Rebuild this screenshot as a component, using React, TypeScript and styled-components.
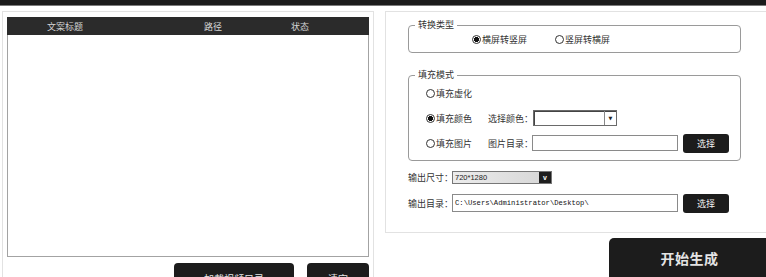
import React from 'react';
import styled, { createGlobalStyle } from 'styled-components';

const GlobalStyle = createGlobalStyle`
  html, body {
    margin: 0;
    padding: 0;
    overflow: hidden;
    background: #fff;
  }
  body {
    font-family: "Noto Sans CJK SC", "Noto Sans", sans-serif;
    font-size: 9px;
    color: #333;
  }
`;

const TopBar = styled.div`
  height: 5px;
  background: #1b1b1b;
  border-bottom: 1px solid #7a7a7a;
`;

const Main = styled.div`
  display: flex;
  gap: 11px;
  padding: 5px 0 0 2px;
`;

const LeftPanel = styled.div`
  width: 372px;
  height: 290px;
  box-sizing: border-box;
  flex-shrink: 0;
  border: 1px solid #e2e2e2;
  border-bottom: none;
  padding: 5px 4px 0;
`;

const Table = styled.div`
  display: flex;
  flex-direction: column;
  height: 240px;
  box-sizing: border-box;
  border: 1px solid #a3a3a3;
  border-top: none;
`;

const TableHead = styled.div`
  display: flex;
  align-items: center;
  height: 18px;
  margin: 0 -1px;
  background: #2b2b2b;
  color: #d6d6d6;
`;

const HeadCell = styled.div<{ $w: number; $ml?: number }>`
  width: ${(p) => p.$w}px;
  margin-left: ${(p) => p.$ml ?? 0}px;
  text-align: center;
`;

const ButtonRow = styled.div`
  display: flex;
  justify-content: flex-end;
  gap: 13px;
  margin-top: 6px;
`;

const DarkButton = styled.button<{ $w: number }>`
  width: ${(p) => p.$w}px;
  height: 30px;
  border: none;
  border-radius: 4px;
  background: #1c1c1c;
  color: #e6e6e6;
  font-family: "Noto Sans CJK SC", sans-serif;
  font-size: 10px;
  padding: 0;
`;

const RightColumn = styled.div`
  display: flex;
  flex-direction: column;
  flex: 1;
`;

const RightPanel = styled.div`
  border: 1px solid #e2e2e2;
  border-right: none;
  padding: 7px 0 19px 22px;
`;

const GroupBox = styled.fieldset<{ $mt?: number }>`
  width: 333px;
  box-sizing: border-box;
  margin: ${(p) => p.$mt ?? 0}px 0 0;
  border: 1px solid #9a9a9a;
  border-radius: 4px;
  padding: 2px 0 7px 0;
  min-inline-size: 0;
`;

const Legend = styled.legend`
  font-size: 9px;
  line-height: 12px;
  padding: 0 3px;
  margin-left: 6px;
  color: #333;
`;

const GroupRow = styled.div<{ $pl: number; $h?: number }>`
  display: flex;
  align-items: center;
  height: ${(p) => p.$h ?? 20}px;
  padding-left: ${(p) => p.$pl}px;
`;

const GroupRows = styled.div`
  display: flex;
  flex-direction: column;
  gap: 5px;
`;

const RadioItem = styled.label<{ $w: number }>`
  display: inline-flex;
  align-items: center;
  gap: 1px;
  width: ${(p) => p.$w}px;
`;

const RadioDot = styled.span<{ $on?: boolean }>`
  width: 9px;
  height: 9px;
  box-sizing: border-box;
  border-radius: 50%;
  border: 1px solid #333;
  background: ${(p) =>
    p.$on ? 'radial-gradient(circle, #111 0 2.3px, #fff 2.8px)' : '#fff'};
`;

const FieldLabel = styled.span<{ $w: number }>`
  width: ${(p) => p.$w}px;
  white-space: nowrap;
`;

const ColorSelect = styled.div`
  display: flex;
  width: 84px;
  height: 16px;
  box-sizing: border-box;
  border: 1px solid #6a6a6a;
  box-shadow: inset 1px 1px 0 #444;
  background: #fff;
`;

const ColorArrow = styled.div`
  width: 11px;
  margin-left: auto;
  border-left: 1px solid #888;
  display: flex;
  align-items: center;
  justify-content: center;
  font-family: "DejaVu Sans", sans-serif;
  font-size: 5px;
  color: #222;
`;

const TextBox = styled.div<{ $w: number; $h: number }>`
  width: ${(p) => p.$w}px;
  height: ${(p) => p.$h}px;
  box-sizing: border-box;
  border: 1px solid #8a8a8a;
  background: #fff;
  display: flex;
  align-items: center;
  padding-left: 2px;
  font-family: "Liberation Mono", monospace;
  font-size: 7.2px;
  color: #111;
  white-space: nowrap;
  overflow: hidden;
`;

const SmallButton = styled.button`
  width: 46px;
  height: 19px;
  margin-left: 5px;
  border: none;
  border-radius: 3px;
  background: #1c1c1c;
  color: #f0f0f0;
  font-family: "Noto Sans CJK SC", sans-serif;
  font-size: 9px;
  padding: 0;
`;

const OutputRows = styled.div`
  display: flex;
  flex-direction: column;
  gap: 6px;
  margin-top: 6px;
`;

const OutputRow = styled.div`
  display: flex;
  align-items: center;
  height: 20px;
`;

const SizeSelect = styled.div`
  display: flex;
  width: 100px;
  height: 13px;
  box-sizing: border-box;
  border: 1px solid #777;
  background: linear-gradient(to right, #ececec, #d6d6d6);
`;

const SizeValue = styled.span`
  flex: 1;
  padding-left: 2px;
  font-family: "Liberation Sans", sans-serif;
  font-size: 7.5px;
  line-height: 11px;
  color: #222;
`;

const SizeArrow = styled.span`
  width: 12px;
  background: #1e1e1e;
  color: #fff;
  font-family: "Liberation Sans", sans-serif;
  font-weight: bold;
  font-size: 7px;
  line-height: 11px;
  text-align: center;
`;

const StartButton = styled.button`
  width: 161px;
  height: 40px;
  margin: 5px 0 0 224px;
  border: none;
  border-radius: 5px 5px 0 0;
  background: #1c1c1c;
  color: #e4e4e4;
  font-family: "Noto Sans CJK SC", serif;
  font-weight: 700;
  font-size: 14px;
  letter-spacing: 0.5px;
  padding: 0;
`;

export default function App() {
  return (
    <>
      <GlobalStyle />
      <TopBar />
      <Main>
        <LeftPanel>
          <Table>
            <TableHead>
              <HeadCell $w={116}>文案标题</HeadCell>
              <HeadCell $w={80} $ml={50}>路径</HeadCell>
              <HeadCell $w={94}>状态</HeadCell>
            </TableHead>
          </Table>
          <ButtonRow>
            <DarkButton $w={120}>加载视频目录</DarkButton>
            <DarkButton $w={62}>清空</DarkButton>
          </ButtonRow>
        </LeftPanel>

        <RightColumn>
          <RightPanel>
            <GroupBox>
              <Legend>转换类型</Legend>
              <GroupRow $pl={63} $h={12}>
                <RadioItem $w={83}>
                  <RadioDot $on />
                  横屏转竖屏
                </RadioItem>
                <RadioItem $w={80}>
                  <RadioDot />
                  竖屏转横屏
                </RadioItem>
              </GroupRow>
            </GroupBox>

            <GroupBox $mt={16}>
              <Legend>填充模式</Legend>
              <GroupRows>
                <GroupRow $pl={17}>
                  <RadioItem $w={62}>
                    <RadioDot />
                    填充虚化
                  </RadioItem>
                </GroupRow>
                <GroupRow $pl={17}>
                  <RadioItem $w={62}>
                    <RadioDot $on />
                    填充颜色
                  </RadioItem>
                  <FieldLabel $w={45}>选择颜色：</FieldLabel>
                  <ColorSelect>
                    <ColorArrow>▼</ColorArrow>
                  </ColorSelect>
                </GroupRow>
                <GroupRow $pl={17}>
                  <RadioItem $w={62}>
                    <RadioDot />
                    填充图片
                  </RadioItem>
                  <FieldLabel $w={44}>图片目录：</FieldLabel>
                  <TextBox $w={146} $h={16} />
                  <SmallButton>选择</SmallButton>
                </GroupRow>
              </GroupRows>
            </GroupBox>

            <OutputRows>
              <OutputRow>
                <FieldLabel $w={44}>输出尺寸：</FieldLabel>
                <SizeSelect>
                  <SizeValue>720*1280</SizeValue>
                  <SizeArrow>v</SizeArrow>
                </SizeSelect>
              </OutputRow>
              <OutputRow>
                <FieldLabel $w={44}>输出目录：</FieldLabel>
                <TextBox $w={226} $h={18}>
                  C:\Users\Administrator\Desktop\
                </TextBox>
                <SmallButton>选择</SmallButton>
              </OutputRow>
            </OutputRows>
          </RightPanel>
          <StartButton>开始生成</StartButton>
        </RightColumn>
      </Main>
    </>
  );
}
